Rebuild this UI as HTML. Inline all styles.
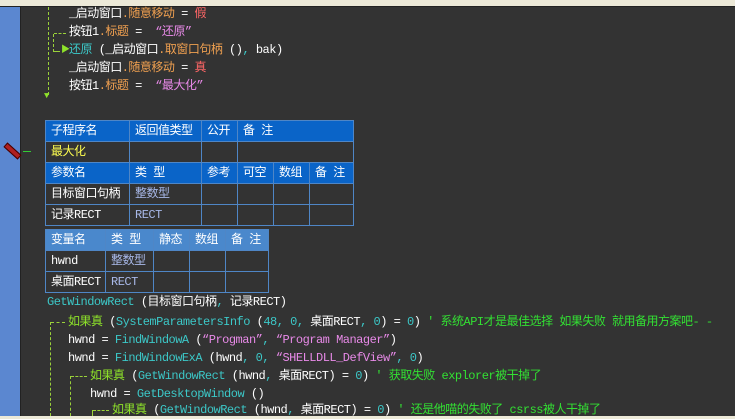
<!DOCTYPE html>
<html><head><meta charset="utf-8"><style>
body{margin:0;width:735px;height:419px;overflow:hidden;background:#333;font-family:"Liberation Mono","Noto Sans CJK SC",monospace;font-size:12px;letter-spacing:-0.5px;color:#fff;position:relative}
.top{position:absolute;left:0;top:0;width:735px;height:6px;background:#ece9d8;border-bottom:1px solid #222}
.gut{position:absolute;left:0;top:7px;width:20px;height:409px;background:#5b87d0;border-right:1px solid #222}
.bot{position:absolute;left:0;top:416px;width:735px;height:3px;background:#ece9d8}
.l{position:absolute;white-space:pre;line-height:16px}
.o{color:#f0a050}.p{color:#e88ae8}.r{color:#ff6666}.c{color:#3cc8c8}.g{color:#8ee22a}.cm{color:#33e033}.t{color:#a8b8e8}.y{color:#ffff50}
.v{position:absolute;border-left:1px dashed #9bd23a;width:0}
.h{position:absolute;border-top:1px dashed #9bd23a;height:0}
table{position:absolute;border-collapse:collapse;table-layout:fixed}
td{border:1px solid #4f86c6;height:20px;padding:0 0 0 5px;white-space:nowrap;overflow:hidden;font-size:12px;line-height:20px;box-sizing:border-box}
.hd td{background:#0a64c8}
.hd2 td{background:#4a88cc}
</style></head><body>
<div class="top"></div><div class="gut"></div><div class="bot"></div>
<div class="v" style="left:48px;top:7px;height:88px"></div>
<div class="v" style="left:53px;top:34px;height:18px"></div>
<div class="h" style="left:54px;top:33px;width:12px"></div>
<div class="h" style="left:54px;top:51px;width:6px"></div>
<div class="l" style="left:61px;top:42px;color:#8ee22a;font-size:9px">▶</div>
<div class="l" style="left:44px;top:88px;color:#8ee22a;font-size:9px">▼</div>
<div class="l" style="left:69px;top:6px">_启动窗口<span class="o">.随意移动</span> = <span class="r">假</span></div>
<div class="l" style="left:69px;top:24px">按钮1<span class="o">.标题</span> =  <span class="p">“还原”</span></div>
<div class="l" style="left:69px;top:42px"><span class="c">还原</span> (_启动窗口<span class="o">.取窗口句柄</span> ()<span class="c">,</span> bak)</div>
<div class="l" style="left:69px;top:60px">_启动窗口<span class="o">.随意移动</span> = <span class="r">真</span></div>
<div class="l" style="left:69px;top:78px">按钮1<span class="o">.标题</span> =  <span class="p">“最大化”</span></div>
<div style="position:absolute;left:3px;top:148px;width:17px;height:4px;background:#b02020;border:1px solid #400;transform:rotate(42deg)"></div>
<div class="h" style="left:23px;top:151px;width:8px;border-top:1px solid #3c3"></div>
<table style="left:45px;top:120px;width:308px">
<colgroup><col style="width:84px"><col style="width:72px"><col style="width:36px"><col style="width:36px"><col style="width:36px"><col style="width:44px"></colgroup>
<tr class="hd"><td>子程序名</td><td>返回值类型</td><td>公开</td><td colspan="3">备 注</td></tr>
<tr><td class="y">最大化</td><td></td><td></td><td colspan="3"></td></tr>
<tr class="hd"><td>参数名</td><td>类 型</td><td>参考</td><td>可空</td><td>数组</td><td>备 注</td></tr>
<tr><td>目标窗口句柄</td><td class="t">整数型</td><td></td><td></td><td></td><td></td></tr>
<tr><td>记录RECT</td><td class="t">RECT</td><td></td><td></td><td></td><td></td></tr>
</table>
<table style="left:45px;top:229px;width:223px">
<colgroup><col style="width:60px"><col style="width:48px"><col style="width:36px"><col style="width:36px"><col style="width:43px"></colgroup>
<tr class="hd2"><td>变量名</td><td>类 型</td><td>静态</td><td>数组</td><td>备 注</td></tr>
<tr><td>hwnd</td><td class="t">整数型</td><td></td><td></td><td></td></tr>
<tr><td>桌面RECT</td><td class="t">RECT</td><td></td><td></td><td></td></tr>
</table>
<div class="l" style="left:47px;top:294px"><span class="c">GetWindowRect</span> (目标窗口句柄<span class="c">,</span> 记录RECT)</div>
<div class="v" style="left:50px;top:322px;height:94px"></div>
<div class="h" style="left:51px;top:322px;width:14px"></div>
<div class="l" style="left:68px;top:314px"><span class="g">如果真</span> (<span class="c">SystemParametersInfo</span> (<span class="c">48, 0,</span> 桌面RECT<span class="c">, 0</span>) = <span class="c">0</span>) <span class="cm">' 系统API才是最佳选择 如果失败 就用备用方案吧- -</span></div>
<div class="l" style="left:68px;top:332px">hwnd = <span class="c">FindWindowA</span> (<span class="p">“Progman”</span><span class="c">,</span> <span class="p">“Program Manager”</span>)</div>
<div class="l" style="left:68px;top:350px">hwnd = <span class="c">FindWindowExA</span> (hwnd<span class="c">, 0,</span> <span class="p">“SHELLDLL_DefView”</span><span class="c">, 0</span>)</div>
<div class="v" style="left:70px;top:376px;height:40px"></div>
<div class="h" style="left:71px;top:376px;width:16px"></div>
<div class="l" style="left:90px;top:368px"><span class="g">如果真</span> (<span class="c">GetWindowRect</span> (hwnd<span class="c">,</span> 桌面RECT) = <span class="c">0</span>) <span class="cm">' 获取失败 explorer被干掉了</span></div>
<div class="l" style="left:90px;top:386px">hwnd = <span class="c">GetDesktopWindow</span> ()</div>
<div class="v" style="left:92px;top:410px;height:6px"></div>
<div class="h" style="left:93px;top:410px;width:16px"></div>
<div class="l" style="left:112px;top:402px"><span class="g">如果真</span> (<span class="c">GetWindowRect</span> (hwnd<span class="c">,</span> 桌面RECT) = <span class="c">0</span>) <span class="cm">' 还是他喵的失败了 csrss被人干掉了</span></div>
</body></html>
